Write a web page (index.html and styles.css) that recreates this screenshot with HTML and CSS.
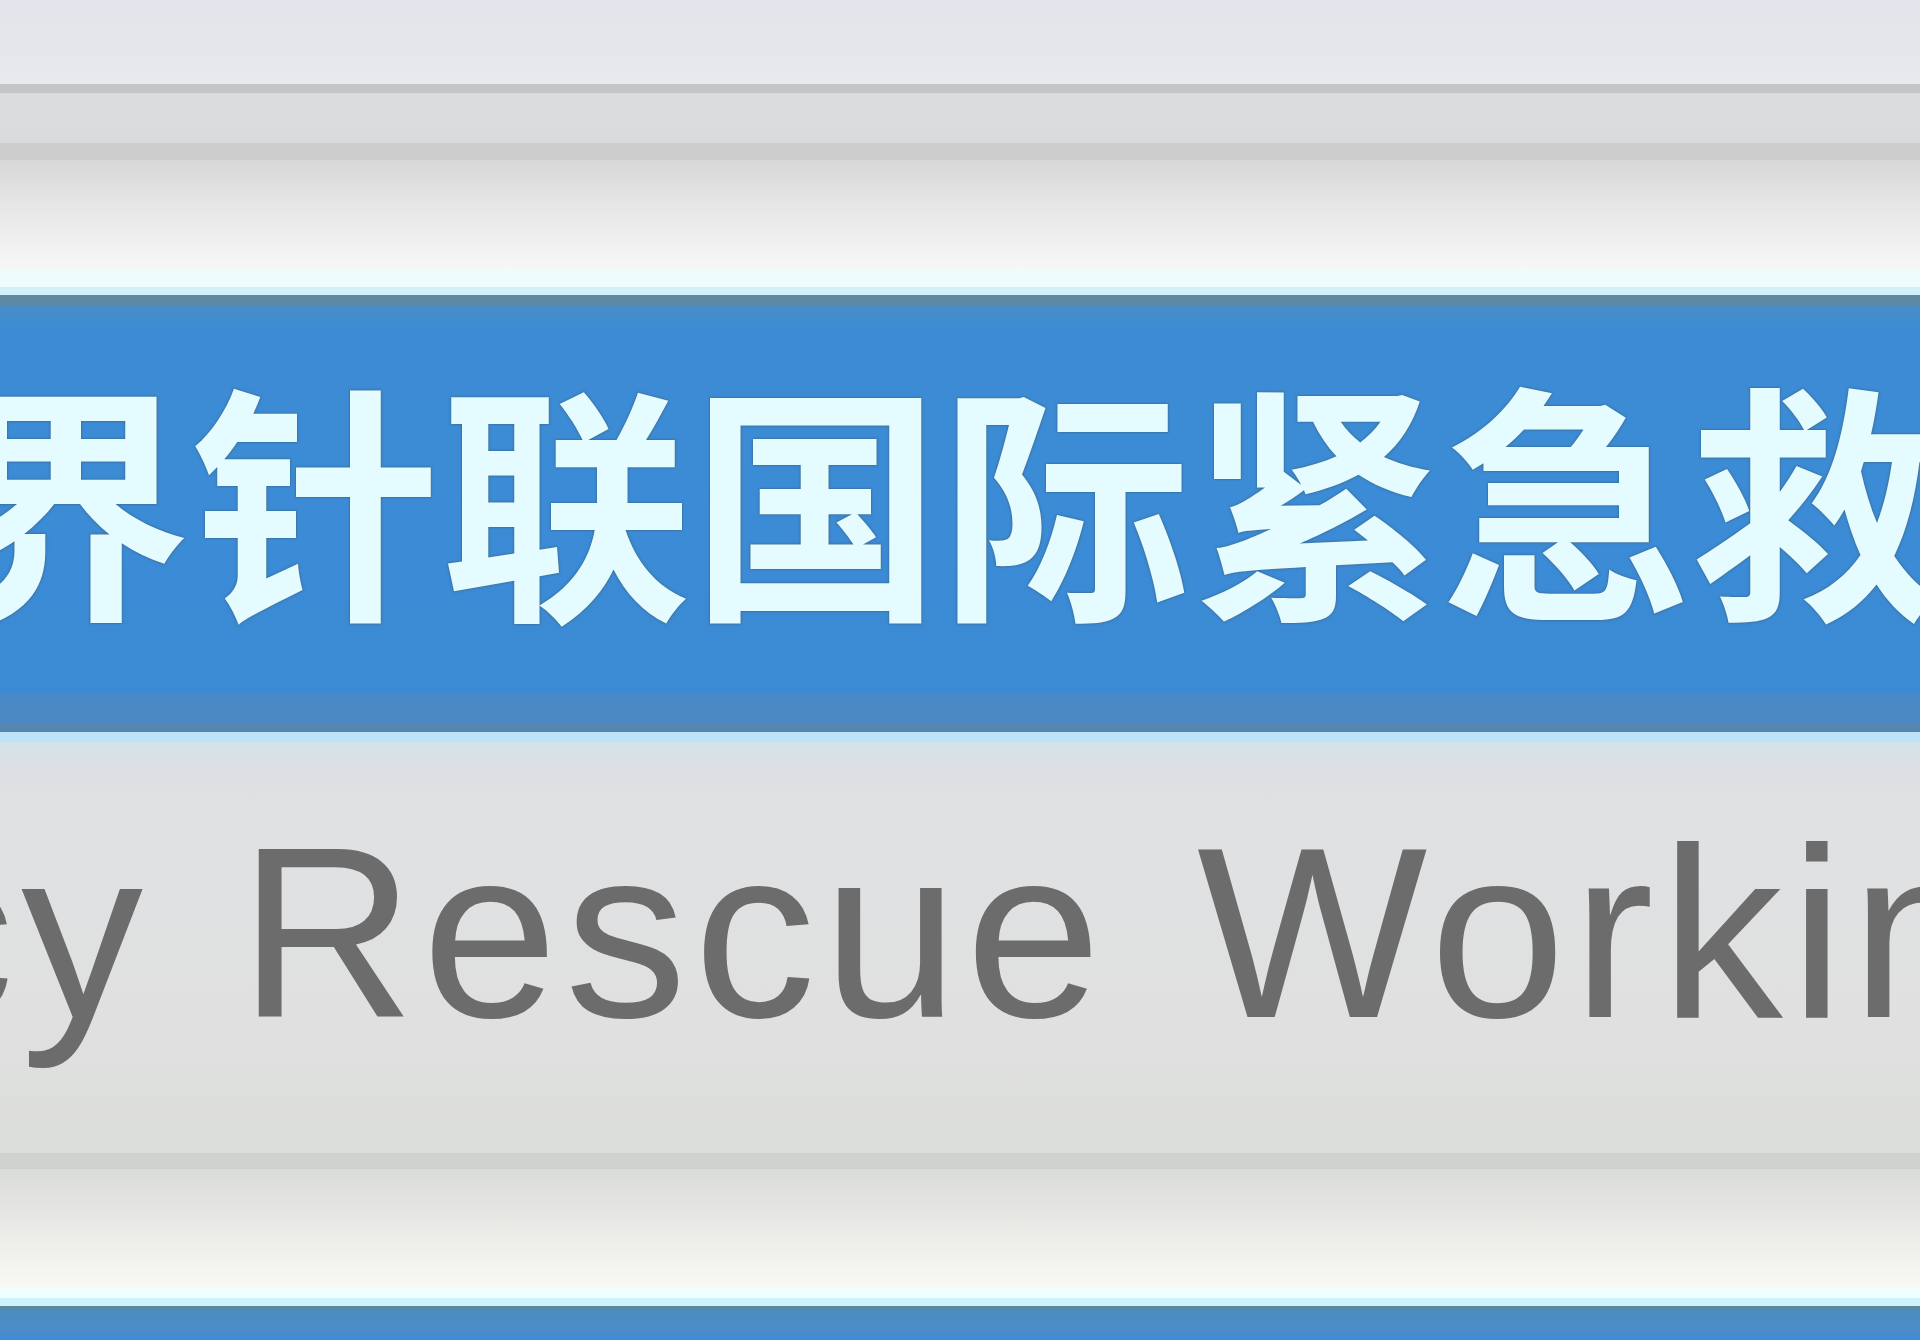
FILE: index.html
```html
<!DOCTYPE html>
<html lang="zh-CN">
<head>
<meta charset="utf-8">
<title>世界针联国际紧急救援工作委员会</title>
<link rel="stylesheet" href="styles.css">
</head>
<body>
<div class="page">
  <div class="top-strip"></div>
  <div class="frame-upper"></div>
  <div class="title-band">
    <div class="title-cn">世界针联国际紧急救援工作委员会</div>
  </div>
  <div class="subtitle-band">
    <div class="title-en">Emergency Rescue Working Committee</div>
  </div>
  <div class="bottom-band"></div>
</div>
</body>
</html>
```

FILE: styles.css
```css
html, body {
  margin: 0;
  padding: 0;
}
body {
  width: 1920px;
  height: 1340px;
  overflow: hidden;
  background: #e6e7ec;
}
.page {
  display: flex;
  flex-direction: column;
  width: 1920px;
  height: 1340px;
  overflow: hidden;
}
.top-strip {
  height: 84px;
  flex: none;
  background: linear-gradient(to bottom, #e4e4ec 0px, #e6e7eb 60px, #e9eaed 84px);
}
.frame-upper {
  height: 211px;
  flex: none;
  background: linear-gradient(to bottom,
    #c4c5c7 0px, #c4c5c7 9px,
    #dcdde0 9px, #dadbdc 59px,
    #cdcdcd 59px, #cdcdcd 76px,
    #d7d7d7 76px, #e6e6e6 120px, #f7f7f7 186px,
    #eefcfd 186px, #eefcfd 203px,
    #d2f0fa 203px, #d2f0fa 211px);
}
.title-band {
  height: 437px;
  flex: none;
  display: flex;
  align-items: center;
  padding-bottom: 44px;
  box-sizing: border-box;
  overflow: hidden;
  background: linear-gradient(to bottom,
    #5b8aa2 0px, #5b8aa2 10px,
    #4a8dc4 10px, #3d8bd4 32px,
    #3b8bd6 200px, #3b8ad4 398px,
    #4889c6 398px, #4b88c4 428px,
    #5685ad 428px, #5685ad 437px);
}
.title-cn {
  flex: none;
  margin-left: -309px;
  white-space: nowrap;
  font-family: "Noto Sans CJK SC", "Noto Sans CJK TC", sans-serif;
  font-weight: 700;
  font-size: 250px;
  line-height: 1;
  color: #e4fcff;
  text-shadow: 0 0 3px rgba(60, 90, 110, 0.75), 0 0 1px rgba(60, 90, 110, 0.85);
}
.subtitle-band {
  height: 574px;
  flex: none;
  display: flex;
  align-items: flex-start;
  overflow: hidden;
  background: linear-gradient(to bottom,
    #bde3f9 0px, #bde3f9 10px,
    #d2e3ea 10px, #d8e1e6 24px,
    #dcdfe2 40px, #e0e1e3 78px,
    #dfe0df 300px, #dcdedb 421px,
    #d0d2cf 421px, #d0d2cf 437px,
    #dadcd9 437px, #ebebe8 500px, #f8f8f5 556px,
    #eefdfd 556px, #eefdfd 566px,
    #d0f2fc 566px, #d0f2fc 574px);
}
.title-en {
  flex: none;
  margin-top: 79px;
  margin-left: -1147px;
  white-space: nowrap;
  font-family: "Liberation Sans", Arial, sans-serif;
  font-weight: 400;
  font-size: 244px;
  line-height: 1;
  letter-spacing: 7px;
  word-spacing: 14px;
  color: #6c6c6c;
}
.bottom-band {
  flex: 1;
  background: linear-gradient(to bottom,
    #5a8aa0 0px, #5a8aa0 4px,
    #4c8cc0 4px, #4a8dc8 24px, #3f8cd6 34px);
}
```
